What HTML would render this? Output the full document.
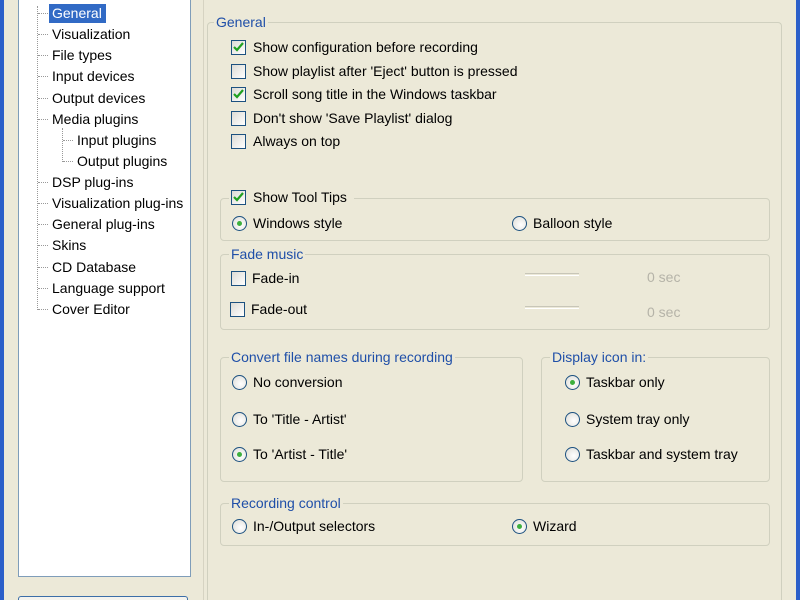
<!DOCTYPE html>
<html style="overflow:hidden;width:800px;height:600px"><head><style>
html,body{margin:0;padding:0}
body{width:800px;height:600px;background:#ECE9D8;position:relative;overflow:hidden;font-family:"Liberation Sans",Tahoma,sans-serif;font-size:14px;color:#000}
div,span{position:absolute;box-sizing:border-box}
.t{white-space:nowrap;line-height:16px}
.g{border:1px solid #D0D0BF;border-radius:4px}
.lg{color:#1F4FA8;background:#ECE9D8;padding:0 2px;line-height:16px;white-space:nowrap}
.cb{width:15px;height:15px;border:1px solid #1C5180;background:linear-gradient(135deg,#DCDBD5,#fff)}
.rd{width:15px;height:15px;border:1px solid #1C5180;border-radius:50%;background:radial-gradient(circle at 60% 60%,#fff,#DCDBD5)}
.rd.on::after{content:"";position:absolute;left:4px;top:4px;width:5px;height:5px;border-radius:50%;background:#3DAF3D}
.dot{border-left:1px dotted #999}
.dh{border-top:1px dotted #999;height:1px}
</style></head><body>
<div style="left:0;top:0;width:4px;height:600px;background:#2B5FC9"></div>
<div style="left:796px;top:0;width:4px;height:600px;background:#2B5FC9"></div>
<div style="left:18px;top:-2px;width:173px;height:579px;background:#fff;border:1px solid #7F9DB9"></div>
<div class="dot" style="left:37px;top:6px;height:304px;width:1px"></div>
<div class="dot" style="left:62px;top:128px;height:34px;width:1px"></div>
<div style="left:49px;top:4px;width:57px;height:19px;background:#316AC5"></div>
<div class="t" style="left:52px;top:5px;color:#fff">General</div>
<div class="t" style="left:52px;top:26px">Visualization</div>
<div class="t" style="left:52px;top:47px">File types</div>
<div class="t" style="left:52px;top:68px">Input devices</div>
<div class="t" style="left:52px;top:90px">Output devices</div>
<div class="t" style="left:52px;top:111px">Media plugins</div>
<div class="t" style="left:77px;top:132px">Input plugins</div>
<div class="t" style="left:77px;top:153px">Output plugins</div>
<div class="t" style="left:52px;top:174px">DSP plug-ins</div>
<div class="t" style="left:52px;top:195px">Visualization plug-ins</div>
<div class="t" style="left:52px;top:216px">General plug-ins</div>
<div class="t" style="left:52px;top:237px">Skins</div>
<div class="t" style="left:52px;top:259px">CD Database</div>
<div class="t" style="left:52px;top:280px">Language support</div>
<div class="t" style="left:52px;top:301px">Cover Editor</div>
<div class="dh" style="left:38px;top:13px;width:10px"></div>
<div class="dh" style="left:38px;top:34px;width:10px"></div>
<div class="dh" style="left:38px;top:55px;width:10px"></div>
<div class="dh" style="left:38px;top:76px;width:10px"></div>
<div class="dh" style="left:38px;top:98px;width:10px"></div>
<div class="dh" style="left:38px;top:119px;width:10px"></div>
<div class="dh" style="left:63px;top:140px;width:10px"></div>
<div class="dh" style="left:63px;top:161px;width:10px"></div>
<div class="dh" style="left:38px;top:182px;width:10px"></div>
<div class="dh" style="left:38px;top:203px;width:10px"></div>
<div class="dh" style="left:38px;top:224px;width:10px"></div>
<div class="dh" style="left:38px;top:245px;width:10px"></div>
<div class="dh" style="left:38px;top:267px;width:10px"></div>
<div class="dh" style="left:38px;top:288px;width:10px"></div>
<div class="dh" style="left:38px;top:309px;width:10px"></div>
<div style="left:18px;top:596px;width:170px;height:4px;border:1px solid #3C6EA8;border-bottom:none;border-radius:3px 3px 0 0;background:#F4F3EE"></div>
<div style="left:203px;top:0;width:1px;height:600px;background:#D6D3C2"></div>

<div class="g" style="left:207px;top:22px;width:575px;height:590px;border-bottom:none"></div>
<div class="lg" style="left:214px;top:14px">General</div>
<div class="cb" style="left:231px;top:40px"></div><svg style="position:absolute;left:233px;top:42px" width="11" height="11"><path d="M1 5 L4 8 L10 1" stroke="#21A121" stroke-width="2.2" fill="none"/></svg>
<div class="t" style="left:253px;top:39px">Show configuration before recording</div>
<div class="cb" style="left:231px;top:64px"></div>
<div class="t" style="left:253px;top:63px">Show playlist after 'Eject' button is pressed</div>
<div class="cb" style="left:231px;top:87px"></div><svg style="position:absolute;left:233px;top:89px" width="11" height="11"><path d="M1 5 L4 8 L10 1" stroke="#21A121" stroke-width="2.2" fill="none"/></svg>
<div class="t" style="left:253px;top:86px">Scroll song title in the Windows taskbar</div>
<div class="cb" style="left:231px;top:111px"></div>
<div class="t" style="left:253px;top:110px">Don't show 'Save Playlist' dialog</div>
<div class="cb" style="left:231px;top:134px"></div>
<div class="t" style="left:253px;top:133px">Always on top</div>

<div class="g" style="left:220px;top:198px;width:550px;height:43px"></div>
<div style="left:229px;top:188px;width:125px;height:18px;background:#ECE9D8"></div>
<div class="cb" style="left:231px;top:190px"></div><svg style="position:absolute;left:233px;top:192px" width="11" height="11"><path d="M1 5 L4 8 L10 1" stroke="#21A121" stroke-width="2.2" fill="none"/></svg>
<div class="t" style="left:253px;top:189px">Show Tool Tips</div>
<div class="rd on" style="left:232px;top:216px"></div>
<div class="t" style="left:253px;top:215px">Windows style</div>
<div class="rd" style="left:512px;top:216px"></div>
<div class="t" style="left:533px;top:215px">Balloon style</div>

<div class="g" style="left:220px;top:254px;width:550px;height:76px"></div>
<div class="lg" style="left:229px;top:246px">Fade music</div>
<div class="cb" style="left:231px;top:271px"></div>
<div class="t" style="left:252px;top:270px">Fade-in</div>
<div class="cb" style="left:230px;top:302px"></div>
<div class="t" style="left:251px;top:301px">Fade-out</div>
<div style="left:525px;top:273px;width:54px;height:3px;border-top:1px solid #C8C6B8;border-bottom:1px solid #fff"></div>
<div style="left:525px;top:306px;width:54px;height:3px;border-top:1px solid #C8C6B8;border-bottom:1px solid #fff"></div>
<div class="t" style="left:647px;top:269px;color:#B5B3A8">0 sec</div>
<div class="t" style="left:647px;top:304px;color:#B5B3A8">0 sec</div>

<div class="g" style="left:220px;top:357px;width:303px;height:125px"></div>
<div class="lg" style="left:229px;top:349px">Convert file names during recording</div>
<div class="rd" style="left:232px;top:375px"></div>
<div class="t" style="left:253px;top:374px">No conversion</div>
<div class="rd" style="left:232px;top:412px"></div>
<div class="t" style="left:253px;top:411px">To 'Title - Artist'</div>
<div class="rd on" style="left:232px;top:447px"></div>
<div class="t" style="left:253px;top:446px">To 'Artist - Title'</div>

<div class="g" style="left:541px;top:357px;width:229px;height:125px"></div>
<div class="lg" style="left:550px;top:349px">Display icon in:</div>
<div class="rd on" style="left:565px;top:375px"></div>
<div class="t" style="left:586px;top:374px">Taskbar only</div>
<div class="rd" style="left:565px;top:412px"></div>
<div class="t" style="left:586px;top:411px">System tray only</div>
<div class="rd" style="left:565px;top:447px"></div>
<div class="t" style="left:586px;top:446px">Taskbar and system tray</div>

<div class="g" style="left:220px;top:503px;width:550px;height:43px"></div>
<div class="lg" style="left:229px;top:495px">Recording control</div>
<div class="rd" style="left:232px;top:519px"></div>
<div class="t" style="left:253px;top:518px">In-/Output selectors</div>
<div class="rd on" style="left:512px;top:519px"></div>
<div class="t" style="left:533px;top:518px">Wizard</div>
</body></html>
